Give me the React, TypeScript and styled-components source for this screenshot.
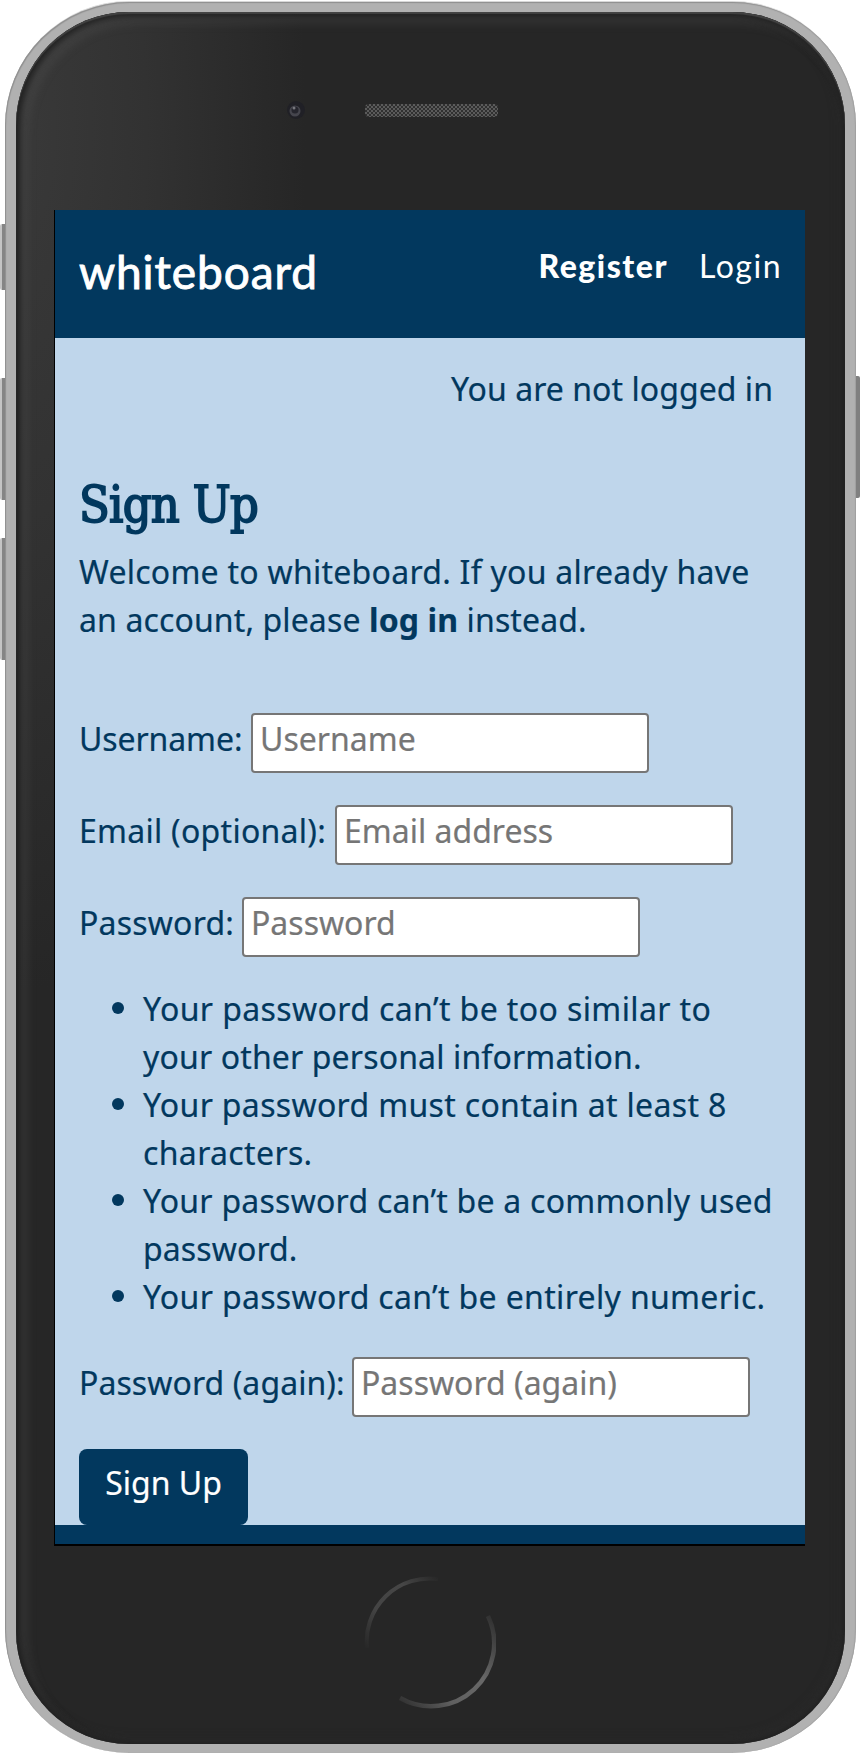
import React from 'react';
import styled, { createGlobalStyle } from 'styled-components';

const navy = '#02385e';
const sky = '#bfd6eb';

const Global = createGlobalStyle`
  * { box-sizing: border-box; }
  body { margin: 0; background: #fff; overflow: hidden; }
`;

const Stage = styled.main`
  position: relative;
  width: 861px;
  height: 1753px;
  padding: 2px 5px 0;
`;

const SideButton = styled.i<{ $top: number; $height: number; $right?: boolean }>`
  position: absolute;
  top: ${p => p.$top}px;
  ${p => (p.$right ? 'right: 1px;' : 'left: 0;')}
  width: 6px;
  height: ${p => p.$height}px;
  border-radius: ${p => (p.$right ? '0 2px 2px 0' : '2px 0 0 2px')};
  background: ${p => (p.$right ? '#808080' : 'linear-gradient(90deg, #c4c4c4 0 2px, #858585 2px)')};
`;

const Shell = styled.div`
  position: relative;
  height: 1751px;
  padding: 10px 11px 9px;
  border-radius: 124px;
  background: #b1b1b1;
  box-shadow: inset 1px 1px 1px #8f8f8f, inset -1px 0 1px #a0a0a0, 0 -2px 0 -1px #d8d8d8;
`;

const Face = styled.div`
  display: flex;
  flex-direction: column;
  height: 100%;
  padding: 0 38px;
  border-radius: 113px;
  background: radial-gradient(ellipse 290px 860px at 0 120px, #393939 0%, #323232 45%, #262626 100%);
  box-shadow: inset 0 2px 1px #444, inset 1px 1px 6px 3px #1f1f1f, inset 9px 9px 8px 3px rgba(85, 85, 85, 0.3), inset -4px -4px 9px 2px rgba(46, 46, 46, 0.6);
`;

const TopBezel = styled.div`
  height: 198px;
  padding: 85px 0 0 232px;
  display: flex;
  align-items: flex-start;
`;

const Hardware = styled.svg`
  display: block;
`;

const Screen = styled.div`
  width: 751px;
  height: 1336px;
  flex: none;
  border-left: 1px solid #000;
  border-bottom: 2px solid #000;
  background: ${sky};
  color: ${navy};
  font: 32px/48px 'Noto Sans', 'Open Sans', sans-serif;
  display: flex;
  flex-direction: column;
`;

const Header = styled.header`
  flex: none;
  height: 128px;
  padding: 32px 23px 0 24px;
  display: flex;
  justify-content: space-between;
  background: ${navy};
  color: #fff;
  font-family: Lato, sans-serif;
`;

const Brand = styled.a`
  font-size: 46px;
  line-height: 60px;
  letter-spacing: 0.9px;
  -webkit-text-stroke: 0.9px #fff;
`;

const Nav = styled.nav`
  display: flex;
  gap: 31px;
  letter-spacing: 1.5px;
`;

const NavItem = styled.a<{ $active?: boolean }>`
  font-weight: ${p => (p.$active ? 900 : 400)};
`;

const Content = styled.section`
  flex: none;
  height: 1187px;
  padding: 27px 24px 0;
  -webkit-text-stroke: 0.2px currentColor;
`;

const Status = styled.p`
  margin: 0;
  padding-right: 8px;
  text-align: right;
  letter-spacing: 0.05px;
`;

const Title = styled.h1`
  margin: 60px 0 0;
  font: 400 50px/64px 'DejaVu Serif Condensed', 'DejaVu Serif', serif;
  font-stretch: condensed;
  letter-spacing: -0.7px;
  -webkit-text-stroke: 1.8px ${navy};
`;

const Intro = styled.p`
  margin: 11px 0 69px;
`;

const Line = styled.span<{ $tracking: number }>`
  display: block;
  letter-spacing: ${p => p.$tracking}px;
  white-space: nowrap;
`;

const Row = styled.div`
  height: 60px;
  margin-bottom: 32px;
  display: flex;
  align-items: flex-start;
`;

const Label = styled.label<{ $width: number; $tracking: number }>`
  width: ${p => p.$width}px;
  flex: none;
  line-height: 52px;
  letter-spacing: ${p => p.$tracking}px;
  white-space: nowrap;
`;

const Input = styled.input`
  width: 398px;
  height: 60px;
  padding: 0 8px 10px 7px;
  border: 2px solid #767676;
  border-radius: 4px;
  background: #fff;
  color: ${navy};
  font: inherit;
  &::placeholder { color: #767676; opacity: 1; }
`;

const Rules = styled.ul`
  margin: -4px 0 36px;
  padding-left: 64px;
  list-style: none;
`;

const Rule = styled.li`
  display: flex;
  &::before {
    content: '';
    flex: none;
    width: 12px;
    height: 12px;
    margin: 17px 19px 0 -31px;
    border-radius: 50%;
    background: ${navy};
  }
`;

const Submit = styled.button`
  display: block;
  width: 169px;
  height: 76px;
  padding: 0 0 8px;
  border: 0;
  border-radius: 8px;
  background: ${navy};
  color: #fff;
  font: inherit;
`;

const Footer = styled.footer`
  flex: none;
  height: 19px;
  background: ${navy};
`;

const BottomBezel = styled.div`
  padding: 30px 0 0 310px;
`;

const rules: { text: string; tracking: number }[][] = [
  [
    { text: 'Your password can’t be too similar to', tracking: 0.39 },
    { text: 'your other personal information.', tracking: 0.14 },
  ],
  [
    { text: 'Your password must contain at least 8', tracking: 0.33 },
    { text: 'characters.', tracking: 0.35 },
  ],
  [
    { text: 'Your password can’t be a commonly used', tracking: 0.24 },
    { text: 'password.', tracking: 0.1 },
  ],
  [{ text: 'Your password can’t be entirely numeric.', tracking: 0.34 }],
];

interface FieldProps {
  label: string;
  placeholder: string;
  width: number;
  tracking?: number;
  type?: string;
}

function Field({ label, placeholder, width, tracking = 0, type = 'text' }: FieldProps) {
  return (
    <Row>
      <Label $width={width} $tracking={tracking}>{label}</Label>
      <Input type={type} placeholder={placeholder} />
    </Row>
  );
}

export default function App() {
  return (
    <Stage>
      <Global />
      <SideButton $top={224} $height={66} />
      <SideButton $top={378} $height={122} />
      <SideButton $top={538} $height={122} />
      <SideButton $top={376} $height={122} $right />
      <Shell>
        <Face>
          <TopBezel>
            <Hardware width="220" height="34" viewBox="0 0 220 34">
              <defs>
                <pattern id="mesh" width="4" height="4" patternUnits="userSpaceOnUse">
                  <rect width="4" height="4" fill="#303030" />
                  <path d="M0 0L4 4M4 0L0 4" stroke="#606060" strokeWidth=".9" />
                </pattern>
              </defs>
              <circle cx="10" cy="13" r="9" fill="#202026" />
              <circle cx="9" cy="14" r="5.5" fill="#45454d" />
              <circle cx="9" cy="13" r="3.5" fill="#25252d" />
              <circle cx="8" cy="11" r="1.5" fill="#77777e" />
              <rect x="79" y="7" width="133" height="13" rx="4" fill="url(#mesh)" />
            </Hardware>
          </TopBezel>
          <Screen>
            <Header>
              <Brand>whiteboard</Brand>
              <Nav><NavItem $active>Register</NavItem><NavItem>Login</NavItem></Nav>
            </Header>
            <Content>
              <Status>You are not logged in</Status>
              <Title>Sign Up</Title>
              <Intro>
                <Line $tracking={0.26}>Welcome to whiteboard. If you already have</Line>
                <Line $tracking={0.12}>an account, please <b>log in</b> instead.</Line>
              </Intro>
              <Field label="Username:" placeholder="Username" width={172} tracking={-0.1} />
              <Field label="Email (optional):" placeholder="Email address" width={256} tracking={0.27} />
              <Field label="Password:" placeholder="Password" width={163} tracking={0.2} type="password" />
              <Rules>
                {rules.map(lines => (
                  <Rule key={lines[0].text}>
                    <div>
                      {lines.map(l => <Line key={l.text} $tracking={l.tracking}>{l.text}</Line>)}
                    </div>
                  </Rule>
                ))}
              </Rules>
              <Field label="Password (again):" placeholder="Password (again)" width={273} tracking={0.07} type="password" />
              <Submit>Sign Up</Submit>
            </Content>
            <Footer />
          </Screen>
          <BottomBezel>
            <Hardware width="132" height="134" viewBox="0 0 132 134">
              <defs>
                <linearGradient id="arcA" gradientUnits="userSpaceOnUse" x1="0" y1="72" x2="74" y2="0">
                  <stop offset="0" stopColor="#262626" /><stop offset=".35" stopColor="#444" /><stop offset=".7" stopColor="#464646" /><stop offset="1" stopColor="#262626" />
                </linearGradient>
                <linearGradient id="arcB" gradientUnits="userSpaceOnUse" x1="36" y1="128" x2="126" y2="38">
                  <stop offset="0" stopColor="#303030" /><stop offset=".3" stopColor="#606060" /><stop offset=".6" stopColor="#686868" /><stop offset="1" stopColor="#303030" />
                </linearGradient>
              </defs>
              <path d="M3 72A63 63 0 0 1 74 3" fill="none" stroke="url(#arcA)" strokeWidth="4" />
              <path d="M36 122A63 63 0 0 0 124 40" fill="none" stroke="url(#arcB)" strokeWidth="4.5" />
            </Hardware>
          </BottomBezel>
        </Face>
      </Shell>
    </Stage>
  );
}
